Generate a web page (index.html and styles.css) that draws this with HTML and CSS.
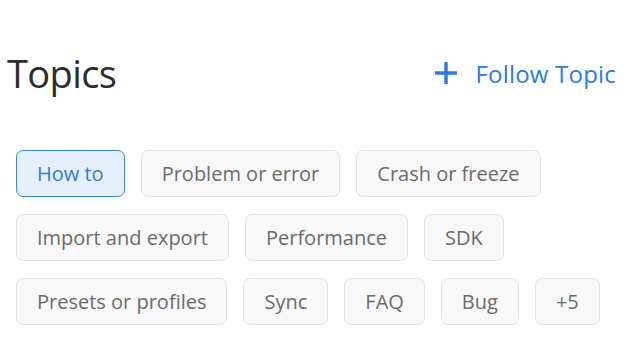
FILE: index.html
```html
<!DOCTYPE html>
<html lang="en">
<head>
    <meta charset="UTF-8">
    <meta name="viewport" content="width=device-width, initial-scale=1.0">
    <title>Topics</title>
    <link rel="stylesheet" href="styles.css">
</head>
<body>
    <div class="topics">
        <div class="topics-header">
            <h2>Topics</h2>
            <a class="follow-btn" href="#">
                <svg width="24" height="24" viewBox="0 0 24 24">
                    <path d="M12 1v22M1 12h22" stroke="#2c7be0" stroke-width="3.4" fill="none"/>
                </svg>
                Follow Topic
            </a>
        </div>

        <ul class="topic-list">
            <li class="topic selected">How to</li>
            <li class="topic">Problem or error</li>
            <li class="topic">Crash or freeze</li>
            <li class="topic">Import and export</li>
            <li class="topic">Performance</li>
            <li class="topic">SDK</li>
            <li class="topic">Presets or profiles</li>
            <li class="topic">Sync</li>
            <li class="topic">FAQ</li>
            <li class="topic">Bug</li>
            <li class="topic">+5</li>
        </ul>
    </div>
</body>
</html>
```

FILE: styles.css
```css
/* Reset */
* {
    margin: 0;
    padding: 0;
    box-sizing: border-box;
}

body {
    font-family: 'Open Sans', 'Liberation Sans', sans-serif;
    background: #fff;
    color: #4b4b4b;
}

.topics {
    width: 644px;
    padding-top: 49px;
}

.topics-header {
    display: flex;
    align-items: center;
    justify-content: space-between;
    padding: 0 28px 0 7px;
    height: 48px;
}

.topics-header h2 {
    font-size: 38px;
    font-weight: normal;
    color: #2c2c2c;
    letter-spacing: -0.6px;
}

.follow-btn {
    display: flex;
    align-items: center;
    gap: 17px;
    font-size: 24px;
    letter-spacing: 0.2px;
    color: #2c7be0;
    text-decoration: none;
}

.topic-list {
    list-style: none;
    display: flex;
    flex-wrap: wrap;
    gap: 17px 16px;
    padding: 0 16px;
    margin-top: 53px;
}

.topic {
    height: 47px;
    display: flex;
    align-items: center;
    padding: 0 20px;
    font-size: 20px;
    color: #6b6b6b;
    background: #f8f8f8;
    border: 1.5px solid #e3e3e3;
    border-radius: 7px;
}

.topic.selected {
    background: #e6f0fd;
    border-color: #3a86e6;
    color: #2c7be0;
}
```
